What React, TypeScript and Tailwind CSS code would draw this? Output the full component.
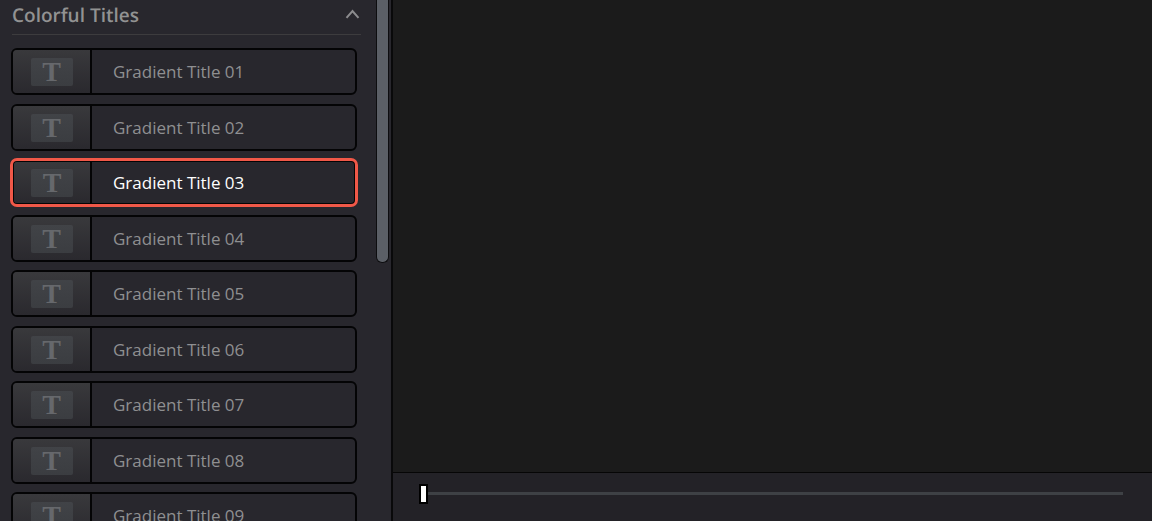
import { useState } from "react";

const titles = [
  "Gradient Title 01",
  "Gradient Title 02",
  "Gradient Title 03",
  "Gradient Title 04",
  "Gradient Title 05",
  "Gradient Title 06",
  "Gradient Title 07",
  "Gradient Title 08",
  "Gradient Title 09",
];

export default function App() {
  const [selected, setSelected] = useState("Gradient Title 03");

  return (
    <div className="flex h-screen overflow-hidden bg-[#28272d] font-['Open_Sans','Noto_Sans',sans-serif] [text-rendering:geometricPrecision]">
      <aside className="flex w-[393px] shrink-0 border-r-2 border-[#09090a]">
        <section className="min-w-0 flex-1 overflow-hidden pl-[11px]">
          <SectionHeader title="Colorful Titles" />
          <ul className="mt-[13px] mr-[19px]">
            {titles.map((title) => (
              <li key={title} className="odd:mb-[9px] even:mb-2">
                <TitleItem title={title} active={title === selected} onSelect={() => setSelected(title)} />
              </li>
            ))}
          </ul>
        </section>
        <div className="w-[15px] shrink-0">
          <div className="h-[263px] w-[13px] rounded-b-md border-x border-b border-[#0d0d0f] bg-[#5b5f66]" />
        </div>
      </aside>
      <main className="flex min-w-0 flex-1 flex-col">
        <div className="flex-1 bg-[#1b1b1b]" />
        <Timeline />
      </main>
    </div>
  );
}

function SectionHeader({ title }: { title: string }) {
  return (
    <header className="mr-[15px] ml-px flex h-[35px] justify-between border-b border-[#3d3c3e]">
      <h2 className="text-[19px] leading-[30px] font-semibold text-[#929292]">{title}</h2>
      <button type="button" aria-label="Collapse" className="h-7 w-4">
        <svg viewBox="0 0 16 28" className="h-7 w-4" fill="none" stroke="#8c8c8e" strokeWidth="2">
          <path d="M1.5 17.8 7.5 11 13.5 17.8" />
        </svg>
      </button>
    </header>
  );
}

function TitleItem({ title, active, onSelect }: { title: string; active: boolean; onSelect: () => void }) {
  return (
    <button
      type="button"
      aria-pressed={active}
      onClick={onSelect}
      className={`flex h-[47px] w-full overflow-hidden rounded-md border-[#040405] text-left text-[17px] leading-6 ${
        active ? "border-3 text-white outline-3 -outline-offset-2 outline-[#f05848]" : "border-2 text-[#8f8f91]"
      }`}
    >
      <span
        className={`flex h-full shrink-0 items-center justify-center border-r-2 border-[#040405] bg-linear-to-b from-[#39393c] to-[#2a292e] ${
          active ? "w-[78px]" : "w-[79px]"
        }`}
      >
        <span
          aria-hidden="true"
          className="flex h-7 w-[42px] items-center justify-center rounded-xs bg-linear-to-b from-[#414347] to-[#3b3d41] font-['Liberation_Serif',serif] text-[28px] leading-7 font-bold text-[#66686c]"
        >
          T
        </span>
      </span>
      <span className="flex h-full min-w-0 flex-1 items-center truncate pl-[21px]">{title}</span>
    </button>
  );
}

function Timeline() {
  const [position, setPosition] = useState(0);

  return (
    <div className="flex h-[49px] shrink-0 items-center border-t border-[#060606] bg-[#232227] pr-[29px] pl-[26px]">
      <input
        type="range"
        aria-label="Playhead"
        min={0}
        max={100}
        value={position}
        onChange={(event) => setPosition(Number(event.target.value))}
        className="mt-[-8px] h-5 w-full appearance-none bg-transparent [&::-webkit-slider-runnable-track]:h-[3px] [&::-webkit-slider-runnable-track]:bg-[#3e4145] [&::-webkit-slider-thumb]:mt-[-8px] [&::-webkit-slider-thumb]:h-5 [&::-webkit-slider-thumb]:w-[9px] [&::-webkit-slider-thumb]:appearance-none [&::-webkit-slider-thumb]:border-2 [&::-webkit-slider-thumb]:border-black [&::-webkit-slider-thumb]:bg-white"
      />
    </div>
  );
}
